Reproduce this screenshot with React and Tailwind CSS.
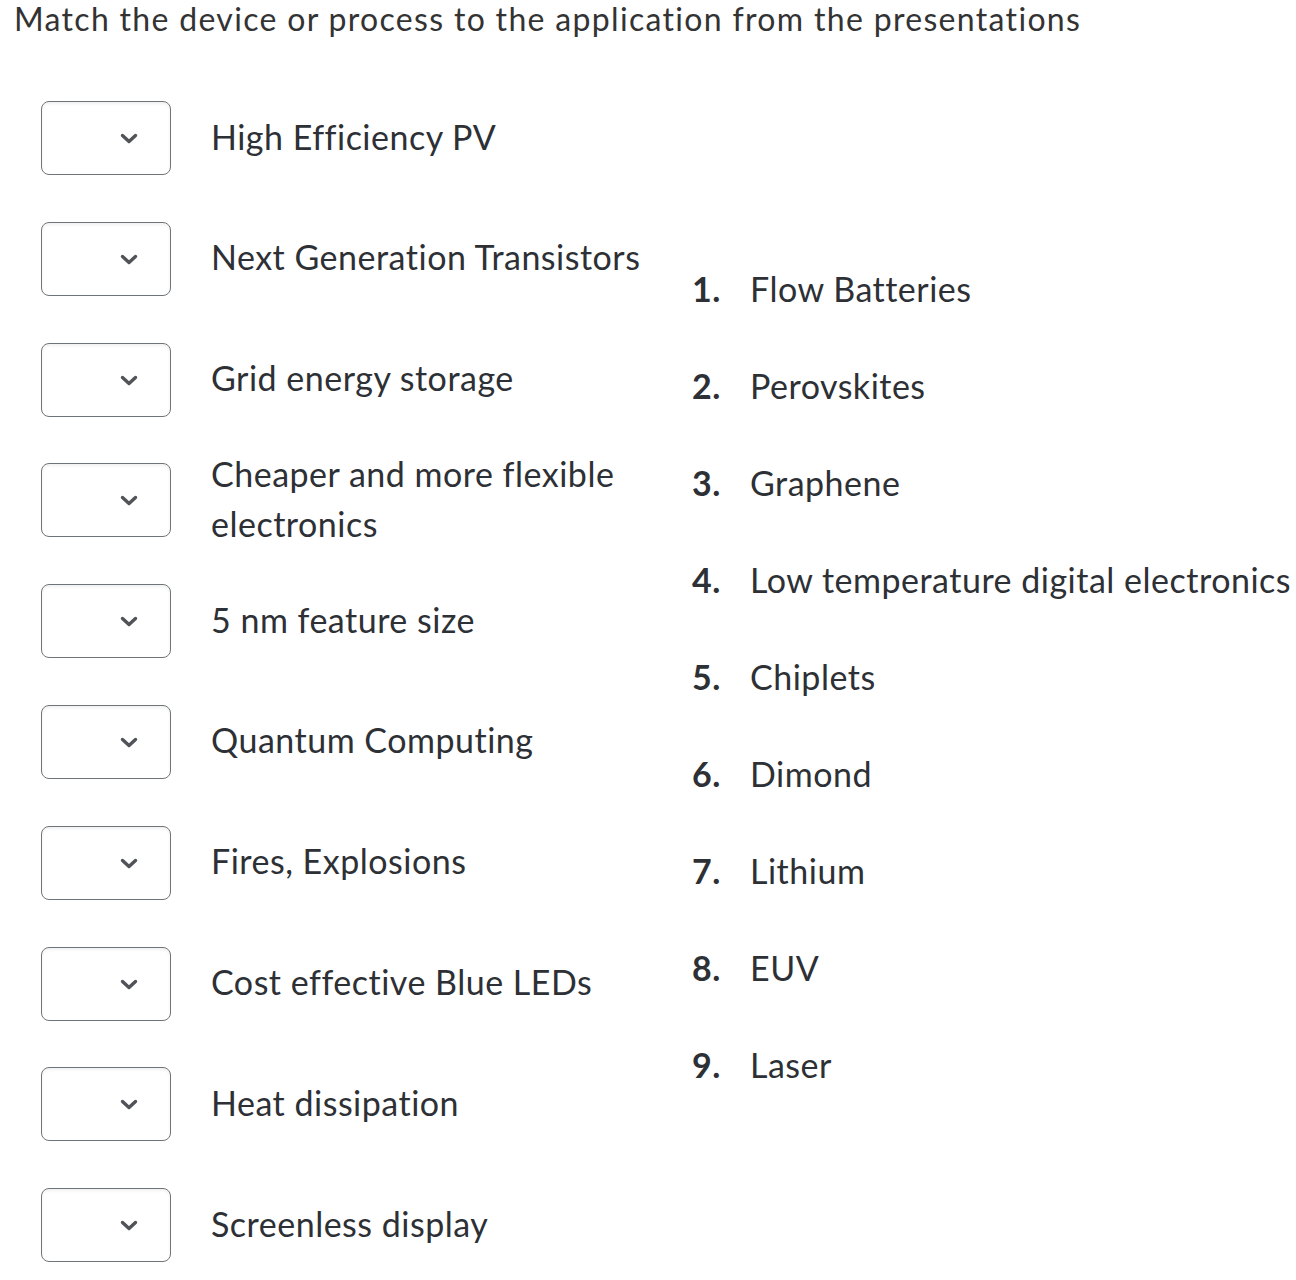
import React from "react";

const left = [
  "High Efficiency PV",
  "Next Generation Transistors",
  "Grid energy storage",
  "Cheaper and more flexible electronics",
  "5 nm feature size",
  "Quantum Computing",
  "Fires, Explosions",
  "Cost effective Blue LEDs",
  "Heat dissipation",
  "Screenless display",
];

const right = [
  "Flow Batteries",
  "Perovskites",
  "Graphene",
  "Low temperature digital electronics",
  "Chiplets",
  "Dimond",
  "Lithium",
  "EUV",
  "Laser",
];

function Select() {
  return (
    <div className="relative w-[130px] h-[74px] shrink-0 rounded-[8px] border border-[#6f7479] bg-white shadow-[inset_0_2px_3px_rgba(0,0,0,0.06)]">
      <svg
        className="absolute left-[77px] top-[31px]"
        width="20"
        height="12"
        viewBox="0 0 20 12"
        fill="none"
      >
        <path d="M3.5 2.5 L10 8.5 L16.5 2.5" stroke="#505458" strokeWidth="3.4" strokeLinecap="round" strokeLinejoin="round" />
      </svg>
    </div>
  );
}

export default function App() {
  return (
    <div
      className="bg-white text-[#2d3035] w-[1296px] h-[1280px] overflow-hidden [font-variant-ligatures:none]"
      style={{ fontFamily: "Lato, 'Noto Sans', sans-serif" }}
    >
      <div className="pl-[14px] text-[32px] leading-[38px] tracking-[1.32px] text-[#333]">
        Match the device or process to the application from the presentations
      </div>
      <div className="flex mt-[63px]">
        <div className="pl-[41px] flex flex-col gap-[46.8px] w-[650px]">
          {left.map((t) => (
            <div key={t} className="flex items-center h-[74px]">
              <Select />
              <div className="ml-[40px] w-[440px] text-[34px] tracking-[0.5px] leading-[50px] pb-[3px]">
                {t}
              </div>
            </div>
          ))}
        </div>
        <div className="flex flex-col justify-center pl-[42px] gap-[47px] pb-[10px]">
          {right.map((t, i) => (
            <div key={t} className="flex text-[34px] tracking-[0.5px] leading-[50px] whitespace-nowrap">
              <span className="w-[58px] font-bold text-[#2d3035]">{i + 1}.</span>
              <span>{t}</span>
            </div>
          ))}
        </div>
      </div>
    </div>
  );
}
